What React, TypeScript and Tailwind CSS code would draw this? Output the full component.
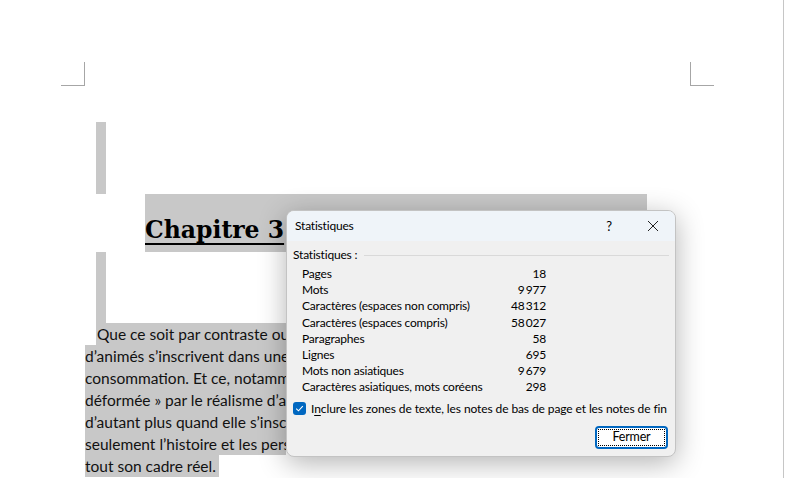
import React from 'react';

const stats = [
  { label: 'Pages', value: '18' },
  { label: 'Mots', value: '9\u2009977' },
  { label: 'Caractères (espaces non compris)', value: '48\u2009312' },
  { label: 'Caractères (espaces compris)', value: '58\u2009027' },
  { label: 'Paragraphes', value: '58' },
  { label: 'Lignes', value: '695' },
  { label: 'Mots non asiatiques', value: '9\u2009679' },
  { label: 'Caractères asiatiques, mots coréens', value: '298' },
];

const lines = [
  'd’animés s’inscrivent dans une société de consommation',
  'consommation. Et ce, notamment par une réalité',
  'déformée » par le réalisme d’animation japonaise',
  'd’autant plus quand elle s’inscrit dans un contexte',
  'seulement l’histoire et les personnages mais aussi',
];

function Dialog() {
  return (
    <div className="absolute left-[286px] top-[210px] w-[390px] h-[247px] rounded-lg border border-[#c3c3c3] bg-[#f0f0f0] overflow-hidden shadow-[0_6px_28px_rgba(0,0,0,0.30)] flex flex-col text-[12px] leading-[16px] tracking-[-0.2px] text-[#000] [font-family:'Lato',sans-serif]">
      {/* title bar */}
      <div className="h-[30px] bg-[#eff4f9] flex items-center pl-[8px]">
        <span className="flex-1">Statistiques</span>
        <span className="w-[14px] text-center mr-[31px] text-[13px]">?</span>
        <svg width="12" height="12" viewBox="0 0 12 12" className="mr-[16px]">
          <path d="M1 1 L11 11 M11 1 L1 11" stroke="#222" strokeWidth="1" />
        </svg>
      </div>

      <div className="flex-1 flex flex-col px-[6px] pt-[5px]">
        <div className="flex items-center h-[18px]">
          <span>Statistiques :</span>
          <div className="flex-1 h-px bg-[#d9d9d9] ml-[7px]" />
        </div>

        <div className="flex flex-col pl-[9px] mt-[2px]">
          {stats.map((s) => (
            <div key={s.label} className="flex h-[16.2px] items-center whitespace-nowrap">
              <span className="w-[200px]">{s.label}</span>
              <span className="w-[44px] text-right">{s.value}</span>
            </div>
          ))}
        </div>

        <div className="flex items-center mt-[5px] h-[16px]">
          <span className="w-[13px] h-[13px] rounded-[3px] bg-[#0067c0] flex items-center justify-center">
            <svg width="9" height="9" viewBox="0 0 9 9">
              <path d="M1.2 4.6 L3.5 6.8 L7.8 2.2" stroke="#fff" strokeWidth="1.1" fill="none" />
            </svg>
          </span>
          <span className="ml-[5px] whitespace-nowrap tracking-[-0.1px]">
            I<span className="underline underline-offset-2">n</span>clure les zones de texte, les notes de bas de page et les notes de fin
          </span>
        </div>

        <div className="flex justify-end mt-[9px] pr-[1px]">
          <div className="w-[73px] h-[23px] rounded-[4px] border-2 border-[#0067c0] bg-white p-[1px]">
            <div className="w-full h-full border border-dotted border-black flex items-center justify-center text-[12.5px]">
              Fermer
            </div>
          </div>
        </div>
      </div>
    </div>
  );
}

export default function App() {
  return (
    <div className="relative w-[785px] h-[478px] overflow-hidden bg-white">
      <div className="w-[784px] h-full border-r border-[#c6c6c6] flex flex-col pt-[62px]">
        {/* page corner marks */}
        <div className="flex h-[24px]">
          <div className="ml-[61px] w-[24px] h-[24px] border-r border-b border-[#a6a6a6]" />
          <div className="ml-[605px] w-[24px] h-[24px] border-l border-b border-[#a6a6a6]" />
        </div>

        <div className="ml-[96px] mt-[36px] w-[10px] h-[72px] bg-[#c8c8c8]" />

        <div className="ml-[145px] w-[502px] h-[58px] bg-[#c8c8c8] flex items-end pb-[10px]">
          <span className="text-[23.5px] font-bold leading-none underline decoration-2 underline-offset-[5px] text-black [font-family:'DejaVu_Serif',serif] whitespace-nowrap">
            Chapitre 3
          </span>
        </div>

        <div className="ml-[96px] w-[10px] h-[71px] bg-[#c8c8c8]" />

        <div className="flex flex-col text-[15.5px] leading-[22px] text-[#111] [font-family:'Lato',sans-serif]">
          <div className="ml-[96px] w-[190px] h-[22px] bg-[#c8c8c8] overflow-hidden whitespace-nowrap pl-[1px]">
            Que ce soit par contraste ou par ressemblance, les films
          </div>
          {lines.map((l) => (
            <div key={l} className="ml-[85px] w-[201px] h-[22px] bg-[#c8c8c8] overflow-hidden whitespace-nowrap">
              {l}
            </div>
          ))}
          <div className="ml-[85px] h-[22px] whitespace-nowrap">
            <span className="inline-block bg-[#c8c8c8] pr-[3px]">tout son cadre réel.</span>
          </div>
        </div>
      </div>

      <Dialog />
    </div>
  );
}
